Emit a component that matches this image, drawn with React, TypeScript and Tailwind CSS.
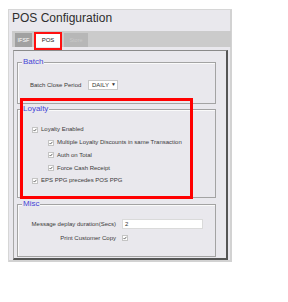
import React from "react"

const font = { fontFamily: '"Liberation Sans", Arial, sans-serif' }

function Check() {
  return (
    <span className="flex h-[6px] w-[6px] shrink-0 items-center justify-center border border-[#c4c4c4] bg-white">
      <svg viewBox="0 0 6 6" className="h-[6px] w-[6px]">
        <path d="M0.8 3.1 L2.3 4.6 L5.2 1.2" fill="none" stroke="#333" strokeWidth="1.1" />
      </svg>
    </span>
  )
}

function Group({ title, className, children }: { title: string; className: string; children: React.ReactNode }) {
  return (
    <div className={`relative ml-[3px] w-[199px] border border-[#a3a3a3] shadow-[inset_1px_1px_0_#fafafa] ${className}`}>
      <span className="absolute left-[4px] top-[-6px] bg-[#e9e8ed] px-[1px] text-[8px] leading-[10px] text-[#4646d6]">
        {title}
      </span>
      {children}
    </div>
  )
}

function CheckRow({ label, indent }: { label: string; indent?: boolean }) {
  return (
    <div className={`flex h-[12.75px] items-center gap-[3px] ${indent ? "pl-[30px]" : "pl-[14px]"}`}>
      <Check />
      <span>{label}</span>
    </div>
  )
}

export default function App() {
  return (
    <div className="h-[302px] w-[288px] bg-white pl-[8px] pt-[9px]" style={font}>
      <div className="relative h-[253px] w-[224px] border-l border-t border-[#d6d6d6] bg-[#e9e8ed] shadow-[inset_-2px_-2px_0_#d2d2d2] text-[6px] text-[#3a3a3a]">
        {/* title */}
        <div className="h-[21px] pl-[3px] pt-[1px] text-[12px] leading-[14px] text-[#2e2e2e]">POS Configuration</div>

        {/* tabs */}
        <div className="ml-[3px] mr-[1px] flex h-[16px] items-end gap-[4px] bg-[#cbcbcb] pl-[3px]">
          <div className="flex h-[14px] w-[17px] items-center justify-center bg-[#a1a1a1] text-[5.5px] text-white">IFSF</div>
          <div className="relative flex h-[13px] w-[24px] items-center justify-center bg-white text-[6px] text-[#222]">
            POS
            <span className="absolute -bottom-[3px] -left-[2px] -right-[2px] -top-[2px] border-[2.5px] border-[#ff1010]" />
          </div>
          <div className="flex h-[14px] w-[24px] items-center justify-center bg-[#b7b7b7] text-[5.5px] text-[#c9c9c9]">Store</div>
        </div>

        {/* frame */}
        <div className="ml-[4px] mt-[3px] h-[210px] w-[215px] border-b-2 border-l border-r-2 border-t border-b-[#555] border-l-[#a8a8a8] border-r-[#555] border-t-[#8a8a8a] bg-[#e9e8ed]">
          <Group title="Batch" className="mt-[11px] h-[42px]">
            <div className="flex items-center gap-[6px] pl-[12px] pt-[17px]">
              <span className="w-[52px]">Batch Close Period</span>
              <span className="flex h-[10px] w-[30px] items-center gap-[2px] border border-[#c9c9c9] bg-white pl-[3px] text-[#333]">
                DAILY <span className="text-[5px]">▼</span>
              </span>
            </div>
          </Group>

          <Group title="Loyalty" className="mt-[5px] h-[89px]">
            <div className="pt-[13.5px]">
              <CheckRow label="Loyalty Enabled" />
              <CheckRow label="Multiple Loyalty Discounts in same Transaction" indent />
              <CheckRow label="Auth on Total" indent />
              <CheckRow label="Force Cash Receipt" indent />
              <CheckRow label="EPS PPG precedes POS PPG" />
            </div>
          </Group>

          <Group title="Misc" className="mt-[6px] h-[53px]">
            <div className="flex flex-col gap-[4px] pt-[14px]">
              <div className="flex h-[10px] items-center gap-[6px]">
                <span className="w-[98px] text-right">Message deplay duration(Secs)</span>
                <span className="flex h-[10px] w-[81px] items-center border border-[#dadada] bg-white pl-[2px] text-[#333]">2</span>
              </div>
              <div className="flex h-[10px] items-center gap-[6px]">
                <span className="w-[98px] text-right">Print Customer Copy</span>
                <Check />
              </div>
            </div>
          </Group>
        </div>

        {/* highlight */}
        <span className="absolute left-[11px] top-[88px] h-[101px] w-[173px] border-[3px] border-[#ff0000]" />
      </div>
    </div>
  )
}
